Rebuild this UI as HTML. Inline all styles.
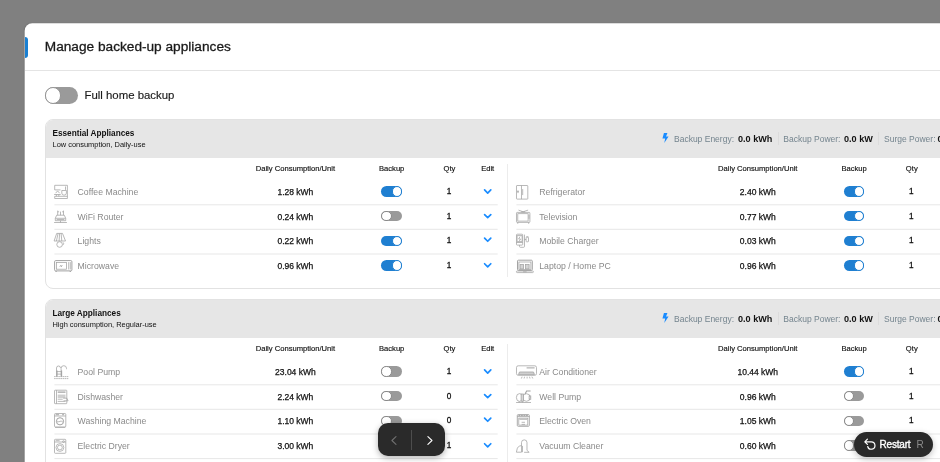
<!DOCTYPE html>
<html lang="en"><head><meta charset="utf-8"><title>Manage backed-up appliances</title>
<style>
*{box-sizing:border-box;margin:0;padding:0}
html,body{width:940px;height:462px;overflow:hidden;background:#808080;font-family:"Liberation Sans",sans-serif;color:#111}
.overlay{position:absolute;inset:0;background:#808080}
.modal{will-change:transform;position:absolute;left:24px;top:23px;width:1000px;height:600px}
.bg{position:absolute;left:0;top:0;transform:translate(.66px,.36px);width:1000px;height:600px;background:#fff;border-radius:7.5px 0 0 0;box-shadow:0 0 1.5px rgba(0,0,0,.12)}
.mi{position:absolute;left:.5px;top:.5px;width:1000px;height:600px}
/* coordinates inside modal are page coords minus (24.5,23.5) */
.mi>*{position:absolute}
.accent{left:0;top:13.5px;width:3px;height:20.7px;background:#1a80d2;border-radius:0 3px 3px 0}
h1{left:20.3px;top:15.5px;font-size:13.66px;font-weight:400;line-height:16px;white-space:nowrap;color:#1a1a1a;-webkit-text-stroke:.3px #1a1a1a}
.hline{left:0;top:46px;width:1000px;height:1px;background:#e4e4e4}
.fh{left:20px;top:63.5px;height:16.5px;width:300px}
.big-tg{position:absolute;left:0;top:0;width:33.5px;height:16.5px;border-radius:9px;background:#9a9a9a}
.big-tg i{position:absolute;left:0;top:0;width:16.5px;height:16.5px;border-radius:50%;background:#fff;border:1px solid #959595}
.fhl{position:absolute;left:40px;top:1px;font-size:11.4px;line-height:14px;white-space:nowrap;color:#1a1a1a;-webkit-text-stroke:.15px #1a1a1a}
.card{left:20.5px;width:1000px;height:170px;border:1px solid #e2e2e2;border-radius:8px 0 0 8px;background:#fff;overflow:hidden}
.card.c1{top:95.5px}
.card.c2{top:275.5px;height:300px}
.card>*{position:absolute}
.chd{left:-1px;top:-1px;width:1000px;height:39px;background:#e6e6e6}
.ct{position:absolute;left:7.5px;top:9.8px;font-size:8.23px;font-weight:700;line-height:10px;white-space:nowrap;color:#111}
.cs2{position:absolute;left:7.5px;top:20.5px;font-size:7.44px;line-height:9px;white-space:nowrap;color:#111}
.stats{position:absolute;left:-45px;top:0;height:39px;width:1000px}
.stats>*{position:absolute}
.bolt{left:662.3px;top:14px;fill:#1a8cff}
.sl{top:14.8px;font-size:8.5px;line-height:10px;color:#74848e;white-space:nowrap}
.stats b{top:14.8px;font-size:9.1px;line-height:10px;color:#111;white-space:nowrap;font-weight:700}
.vd{top:13px;width:1px;height:13px;background:#dcdcdc}
.col{top:38px;height:300px}
.col.l{left:8.4px;width:443.3px}
.col.r{left:470.1px;width:520px}
.vsep{left:460.7px;top:44px;width:1px;height:113px;background:#ececec}
.c2 .vsep{height:250px}
.ch{position:relative;height:22.3px;font-size:7.6px;color:#111;-webkit-text-stroke:.15px #111}
.ch span{position:absolute;top:6px;line-height:9px;white-space:nowrap;transform:translateX(-50%)}
.h1{left:241px}.h2{left:337.3px}.h3{left:395px}.h4{left:433.3px}
.row{position:relative;height:24.6px}
.lines{position:absolute;left:0;top:0;stroke:#e7e7e7;stroke-width:1;pointer-events:none}
.row>*{position:absolute}
.ic{left:0;top:0;width:24px;height:24px}
.ic svg{display:block;fill:none;stroke:#a2a2a2;stroke-width:.75;overflow:visible}
.nm{left:23.2px;top:6.8px;font-size:8.7px;line-height:10px;color:#8a8a8a;white-space:nowrap}
.cs{left:241px;top:6.8px;font-size:8.5px;line-height:10px;color:#111;white-space:nowrap;transform:translateX(-50%);-webkit-text-stroke:.25px #111}
.tg{left:327px;top:6.2px;width:20.6px;height:10.3px;border-radius:6px;background:#9a9a9a}
.tg i{position:absolute;left:0;top:0;width:10.3px;height:10.3px;border-radius:50%;background:#fff;border:1px solid #8a8a8a}
.tg.on{background:#1f7fd1}
.tg.on i{left:10.3px;border-color:#1f7fd1}
.qt{left:394.6px;top:6.8px;font-size:8.2px;line-height:10px;color:#111;transform:translateX(-50%);-webkit-text-stroke:.3px #111}
.ed{left:424px;top:0;width:20px;height:24px}
.ed svg{display:block;fill:none;stroke:#1a8cff;stroke-width:1.7;stroke-linecap:round;stroke-linejoin:round}
.pager{will-change:transform;position:absolute;left:378px;top:423px;width:67px;height:33px;border-radius:10px;background:#2a2a2a;box-shadow:0 2px 6px rgba(0,0,0,.3)}
.pager>*{position:absolute}
.pager svg{fill:none;stroke-width:1.1;stroke-linecap:round;stroke-linejoin:round;top:11.5px}
.pl{left:12.3px;stroke:#707070}
.pr{left:47.8px;stroke:#fff}
.pager i{left:33px;top:7px;width:1px;height:20px;background:#4d4d4d}
.restart{will-change:transform;position:absolute;left:854.2px;top:431.7px;width:79.2px;height:24.5px;border-radius:13px;background:#2a2a2a;color:#fff;box-shadow:0 2px 6px rgba(0,0,0,.25)}
.restart>*{position:absolute}
.restart svg{left:8.8px;top:6px;fill:none;stroke:#fff;stroke-width:1.2;stroke-linecap:round;stroke-linejoin:round}
.rt{left:25.6px;top:7.2px;font-size:10px;line-height:12px;-webkit-text-stroke:.35px #fff;letter-spacing:-.2px}
.rk{left:62.5px;top:6.8px;font-size:10px;line-height:12px;color:#8c8c8c}
.col.r .cs,.col.r .qt,.col.r .ch span{margin-left:.7px}
.col.r .tg{margin-left:.5px}

</style></head><body>
<div class="overlay"></div>
<main class="modal"><div class="bg"></div><div class="mi">
<div class="accent"></div>
<h1>Manage backed-up appliances</h1>
<div class="hline"></div>
<div class="fh"><span class="big-tg"><i></i></span><span class="fhl">Full home backup</span></div>
<section class="card c1">
<header class="chd"><div class="ct">Essential Appliances</div><div class="cs2">Low consumption, Daily-use</div>
<div class="stats"><svg class="bolt" width="7" height="10" viewBox="0 0 8 11" preserveAspectRatio="none"><path d="M2.2 0h4L4.6 3.8h2.9L2.6 11l1-5H.5z"/></svg><span class="sl" style="left:674px">Backup Energy:</span><b style="left:738px">0.0 kWh</b><i class="vd" style="left:778px"></i><span class="sl" style="left:783.3px">Backup Power:</span><b style="left:844px">0.0 kW</b><i class="vd" style="left:878px"></i><span class="sl" style="left:884px">Surge Power:</span><b style="left:937.6px">0.0 kW</b></div>
</header>
<div class="col l"><div class="ch"><span class="h1">Daily Consumption/Unit</span><span class="h2">Backup</span><span class="h3">Qty</span><span class="h4">Edit</span></div><div class="row"><span class="ic"><svg width="24" height="24" viewBox="-0.2 -4.9 24 24"><path d="M.5 5V.4h12.7v13.2H.5v-2.2M.5 11.4h12.7M.5 5h5.8M11.3 1.6v3.4M7.6 5.6h4.6v2.6a1.9 1.9 0 0 1-1.9 1.9h-.8a1.9 1.9 0 0 1-1.9-1.9zM-.1 9.6h6.6M1.4 8.3l2-2.3 2 2.3M2.2 9.6v1.8M4.6 9.6v1.8"/></svg></span><span class="nm">Coffee Machine</span><span class="cs">1.28 kWh</span><span class="tg on"><i></i></span><span class="qt">1</span><span class="ed"><svg width="20" height="24" viewBox="-9.69 -11.45 20 24"><path d="M-3.1-1.5L0 1.6l3.1-3.1"/></svg></span></div><div class="row"><span class="ic"><svg width="24" height="24" viewBox="-0.1 -5.4 24 24"><path d="M0 12.1h12.8M6.4 10.3v1.8M1.2 7.9h10.4v2.4H1.2zM1.2 7.9l1.4-3.1h7.6l1.4 3.1M3.6 4.8V.2M6.4 4.8V1.2M9.4 4.8V.2M3.6 1.4h1.4M8 1.4h1.4M2.5 9.1h7.8"/></svg></span><span class="nm">WiFi Router</span><span class="cs">0.24 kWh</span><span class="tg"><i></i></span><span class="qt">1</span><span class="ed"><svg width="20" height="24" viewBox="-9.69 -11.05 20 24"><path d="M-3.1-1.5L0 1.6l3.1-3.1"/></svg></span></div><div class="row"><span class="ic"><svg width="24" height="24" viewBox="-0.1 -4.1 24 24"><path d="M2.6 .3h5.8l3 7.6H0zM4 .3L2.3 7.9M5.5 .3L5 7.9M7 .3l.7 7.6M9 9.3c1 .8.6 2.2-.3 2.6"/><circle cx="5.5" cy="11.4" r="2.8"/></svg></span><span class="nm">Lights</span><span class="cs">0.22 kWh</span><span class="tg on"><i></i></span><span class="qt">1</span><span class="ed"><svg width="20" height="24" viewBox="-9.69 -10.65 20 24"><path d="M-3.1-1.5L0 1.6l3.1-3.1"/></svg></span></div><div class="row"><span class="ic"><svg width="24" height="24" viewBox="-0.1 -6.1 24 24"><rect x=".5" y=".5" width="17.3" height="10.3" rx="1.1" stroke-width="1"/><rect x="2.3" y="2.3" width="10.1" height="6.8"/><path d="M14.6 2v7.4M16.2 2v7.4M5.6 6.4l1.4-1.4v1.8l1.4-1.4"/><path stroke-width="1.2" d="M2 10.8v1M16.2 10.8v1"/></svg></span><span class="nm">Microwave</span><span class="cs">0.96 kWh</span><span class="tg on"><i></i></span><span class="qt">1</span><span class="ed"><svg width="20" height="24" viewBox="-9.69 -11.25 20 24"><path d="M-3.1-1.5L0 1.6l3.1-3.1"/></svg></span></div><svg class="lines" width="444" height="130" viewBox="0 0 444 130"><path d="M.4 46.8H443.7"/><path d="M.4 71.3H443.7"/><path d="M.4 96.0H443.7"/></svg></div>
<div class="vsep"></div>
<div class="col r"><div class="ch"><span class="h1">Daily Consumption/Unit</span><span class="h2">Backup</span><span class="h3">Qty</span><span class="h4">Edit</span></div><div class="row"><span class="ic"><svg width="24" height="24" viewBox="-0.1 -5.1 24 24"><rect x=".4" y=".4" width="11.3" height="13.6" rx=".5"/><path d="M5.4 .4v13.6M6.6 4v6M.9 6.6h1.9M1.9 5.2v2.8"/></svg></span><span class="nm">Refrigerator</span><span class="cs">2.40 kWh</span><span class="tg on"><i></i></span><span class="qt">1</span><span class="ed"><svg width="20" height="24" viewBox="-9.39 -11.45 20 24"><path d="M-3.1-1.5L0 1.6l3.1-3.1"/></svg></span></div><div class="row"><span class="ic"><svg width="24" height="24" viewBox="-0.1 -4.8 24 24"><rect x=".4" y="2.6" width="13.4" height="10" rx=".7"/><rect x="1.7" y="3.9" width="10.3" height="7.4"/><path d="M2.4 .3L7 2l5-1.7M5 2.1h4M12.9 5v4"/><path stroke-width="1.2" d="M1.6 12.6v1M12.5 12.6v1"/></svg></span><span class="nm">Television</span><span class="cs">0.77 kWh</span><span class="tg on"><i></i></span><span class="qt">1</span><span class="ed"><svg width="20" height="24" viewBox="-9.39 -11.05 20 24"><path d="M-3.1-1.5L0 1.6l3.1-3.1"/></svg></span></div><div class="row"><span class="ic"><svg width="24" height="24" viewBox="-0.1 -4.8 24 24"><rect x=".4" y=".4" width="6.2" height="10.9" rx=".7"/><path d="M1 1.8h5v6H1zM.4 8.7h6.2M3.9 2.8L2.5 5.2h2L3.1 7.4M3.4 11.3v1.3q0 .9.9.9h3.2q.9 0 .9-.9V.8M8.4 5.7h1.6M10.8 2.4v1M11.8 2.4v1"/><rect x="10" y="3.4" width="2.4" height="4.6" rx=".6"/></svg></span><span class="nm">Mobile Charger</span><span class="cs">0.03 kWh</span><span class="tg on"><i></i></span><span class="qt">1</span><span class="ed"><svg width="20" height="24" viewBox="-9.39 -10.65 20 24"><path d="M-3.1-1.5L0 1.6l3.1-3.1"/></svg></span></div><div class="row"><span class="ic"><svg width="24" height="24" viewBox="-0.1 -5.7 24 24"><rect x="1.4" y=".5" width="14.8" height="10.2" rx=".9" stroke-width="1"/><rect x="2.8" y="2.3" width="12" height="7.4"/><rect x="4" y="4.8" width="3.5" height="4.4" fill="#d4d4d4"/><rect x="9.5" y="4.8" width="3.5" height="4.4" fill="#d4d4d4"/><rect x=".3" y="11.3" width="17" height="1.6" rx=".8"/><path d="M7 12.1h3.5"/></svg></span><span class="nm">Laptop / Home PC</span><span class="cs">0.96 kWh</span><span class="tg on"><i></i></span><span class="qt">1</span><span class="ed"><svg width="20" height="24" viewBox="-9.39 -11.25 20 24"><path d="M-3.1-1.5L0 1.6l3.1-3.1"/></svg></span></div><svg class="lines" width="521" height="130" viewBox="0 0 521 130"><path d="M.4 46.8H520"/><path d="M.4 71.3H520"/><path d="M.4 96.0H520"/></svg></div>
</section>
<section class="card c2">
<header class="chd"><div class="ct">Large Appliances</div><div class="cs2">High consumption, Regular-use</div>
<div class="stats"><svg class="bolt" width="7" height="10" viewBox="0 0 8 11" preserveAspectRatio="none"><path d="M2.2 0h4L4.6 3.8h2.9L2.6 11l1-5H.5z"/></svg><span class="sl" style="left:674px">Backup Energy:</span><b style="left:738px">0.0 kWh</b><i class="vd" style="left:778px"></i><span class="sl" style="left:783.3px">Backup Power:</span><b style="left:844px">0.0 kW</b><i class="vd" style="left:878px"></i><span class="sl" style="left:884px">Surge Power:</span><b style="left:937.6px">0.0 kW</b></div>
</header>
<div class="col l"><div class="ch"><span class="h1">Daily Consumption/Unit</span><span class="h2">Backup</span><span class="h3">Qty</span><span class="h4">Edit</span></div><div class="row"><span class="ic"><svg width="24" height="24" viewBox="-0.1 -5.4 24 24"><path d="M2.4 11.2V2.6a2 2 0 0 1 4 0M7 11.2V3a2.7 2.7 0 0 1 5.4 0v.8M2.4 6.2h4.6M2.4 8.7h4.6"/><path stroke-dasharray="1.6 .5" d="M0 11.2h14.6M0 13.2h14.6"/><path stroke-width="1.1" d="M2.9 11V5M7.5 11V5"/></svg></span><span class="nm">Pool Pump</span><span class="cs">23.04 kWh</span><span class="tg"><i></i></span><span class="qt">1</span><span class="ed"><svg width="20" height="24" viewBox="-9.69 -11.45 20 24"><path d="M-3.1-1.5L0 1.6l3.1-3.1"/></svg></span></div><div class="row"><span class="ic"><svg width="24" height="24" viewBox="-0.1 -4.8 24 24"><rect x=".4" y=".4" width="12.3" height="13.5" rx=".6"/><path d="M2.4 .4v13.5M3.6 5.4h7.8M3.6 9.4h5M3.6 11.6h7.8M9 8.4h3.7l1.3 2.6H9.5"/><path stroke-width="1.2" d="M3.6 2.3h7.8M3.6 7.2h7.8"/></svg></span><span class="nm">Dishwasher</span><span class="cs">2.24 kWh</span><span class="tg"><i></i></span><span class="qt">0</span><span class="ed"><svg width="20" height="24" viewBox="-9.69 -11.05 20 24"><path d="M-3.1-1.5L0 1.6l3.1-3.1"/></svg></span></div><div class="row"><span class="ic"><svg width="24" height="24" viewBox="-0.1 -4.1 24 24"><rect x=".4" y=".4" width="11.3" height="13.5" rx="1"/><path d="M.4 2.9h11.3M.9 14.3h10.3M2.8 8.9c1-1 1.6.4 3.1-.6s2.2.6 3.1.6"/><path stroke-width="1.1" d="M1.5 1.6h3.5M8 1.6h2"/><circle cx="5.9" cy="8.2" r="3.6" stroke-width="1"/></svg></span><span class="nm">Washing Machine</span><span class="cs">1.10 kWh</span><span class="tg"><i></i></span><span class="qt">0</span><span class="ed"><svg width="20" height="24" viewBox="-9.69 -10.65 20 24"><path d="M-3.1-1.5L0 1.6l3.1-3.1"/></svg></span></div><div class="row"><span class="ic"><svg width="24" height="24" viewBox="-0.1 -4.9 24 24"><rect x=".4" y=".4" width="11.3" height="14" rx=".8"/><path d="M.4 3.1h11.3M1.5 1.8h4"/><circle cx="9.4" cy="2.7" r=".9"/><circle cx="5.8" cy="8.6" r="3.9"/><circle cx="5.8" cy="8.6" r="2.4"/></svg></span><span class="nm">Electric Dryer</span><span class="cs">3.00 kWh</span><span class="tg"><i></i></span><span class="qt">1</span><span class="ed"><svg width="20" height="24" viewBox="-9.69 -11.25 20 24"><path d="M-3.1-1.5L0 1.6l3.1-3.1"/></svg></span></div><svg class="lines" width="444" height="130" viewBox="0 0 444 130"><path d="M.4 46.8H443.7"/><path d="M.4 71.3H443.7"/><path d="M.4 96.0H443.7"/><path d="M.4 120.6H443.7"/></svg></div>
<div class="vsep"></div>
<div class="col r"><div class="ch"><span class="h1">Daily Consumption/Unit</span><span class="h2">Backup</span><span class="h3">Qty</span><span class="h4">Edit</span></div><div class="row"><span class="ic"><svg width="24" height="24" viewBox="-0.1 -5.4 24 24"><rect x=".4" y=".4" width="20" height="9.5" rx="1.7"/><path fill="#cfcfcf" d="M2.4 9.2l1-2.6h14l1 2.6z"/><path stroke-width="1" d="M10.5 2.5h8"/><path d="M6 11.3l-.7 1.8M8.5 11.3l-.5 1.8M11 11.3v1.8M13.4 11.3l.5 1.8M15.8 11.3l.9 1.8"/></svg></span><span class="nm">Air Conditioner</span><span class="cs">10.44 kWh</span><span class="tg on"><i></i></span><span class="qt">1</span><span class="ed"><svg width="20" height="24" viewBox="-9.39 -11.45 20 24"><path d="M-3.1-1.5L0 1.6l3.1-3.1"/></svg></span></div><div class="row"><span class="ic"><svg width="24" height="24" viewBox="-0.1 -5.1 24 24"><ellipse cx="3.5" cy="7.4" rx="3.2" ry="3.9"/><circle cx="10.3" cy="7.4" r="3.8"/><rect x="5" y="3.9" width="2.4" height="7.2" fill="#d8d8d8"/><rect x="13" y="5.8" width="1.7" height="3.4"/><path stroke-width="1.1" d="M9 3.8l1.5-2.9h4"/><path d="M0 12.4h14.9M3 11.2v1.2M6.5 11.2v1.2"/></svg></span><span class="nm">Well Pump</span><span class="cs">0.96 kWh</span><span class="tg"><i></i></span><span class="qt">1</span><span class="ed"><svg width="20" height="24" viewBox="-9.39 -11.05 20 24"><path d="M-3.1-1.5L0 1.6l3.1-3.1"/></svg></span></div><div class="row"><span class="ic"><svg width="24" height="24" viewBox="-0.8 -5.1 24 24"><rect x=".5" y=".5" width="12" height="11.7" rx=".9" stroke-width=".9"/><path d="M.5 2.4h12M4.8 8.2h3.4M4.8 10.3h3.4"/><path stroke-width=".9" stroke-dasharray="2 .5" d="M1.6 1.4h9.8"/><path stroke-width=".9" d="M2.6 5.1h7.8"/><rect x="2" y="4" width="9" height="7"/></svg></span><span class="nm">Electric Oven</span><span class="cs">1.05 kWh</span><span class="tg"><i></i></span><span class="qt">1</span><span class="ed"><svg width="20" height="24" viewBox="-9.39 -10.65 20 24"><path d="M-3.1-1.5L0 1.6l3.1-3.1"/></svg></span></div><div class="row"><span class="ic"><svg width="24" height="24" viewBox="-0.1 -5.4 24 24"><path d="M5.4 12.8V3.2a2.75 2.75 0 0 1 5.5 0V11l2 1.8M5.4 6.2c-2.6.2-4.3 1.6-4.6 4.4l-.5 2.2h5.1M6.4 6.5v6.3M8 12.9h5.2"/></svg></span><span class="nm">Vacuum Cleaner</span><span class="cs">0.60 kWh</span><span class="tg"><i></i></span><span class="qt">1</span><span class="ed"><svg width="20" height="24" viewBox="-9.39 -11.25 20 24"><path d="M-3.1-1.5L0 1.6l3.1-3.1"/></svg></span></div><svg class="lines" width="521" height="130" viewBox="0 0 521 130"><path d="M.4 46.8H520"/><path d="M.4 71.3H520"/><path d="M.4 96.0H520"/><path d="M.4 120.6H520"/></svg></div>
</section>
</div></main>
<nav class="pager"><svg class="pl" width="8" height="11" viewBox="0 0 8 11"><path d="M6 1.7L1.9 5.5 6 9.3"/></svg><i></i><svg class="pr" width="8" height="11" viewBox="0 0 8 11"><path d="M1.9 1.7L6 5.5 1.9 9.3"/></svg></nav>
<div class="restart"><svg width="14" height="13" viewBox="0 0 14 13"><path d="M4.4 1.2L1.8 3.8l2.6 2.6M2 3.8h6.3a3.7 3.7 0 1 1-3.6 4.7"/></svg><span class="rt">Restart</span><span class="rk">R</span></div>
</body></html>
